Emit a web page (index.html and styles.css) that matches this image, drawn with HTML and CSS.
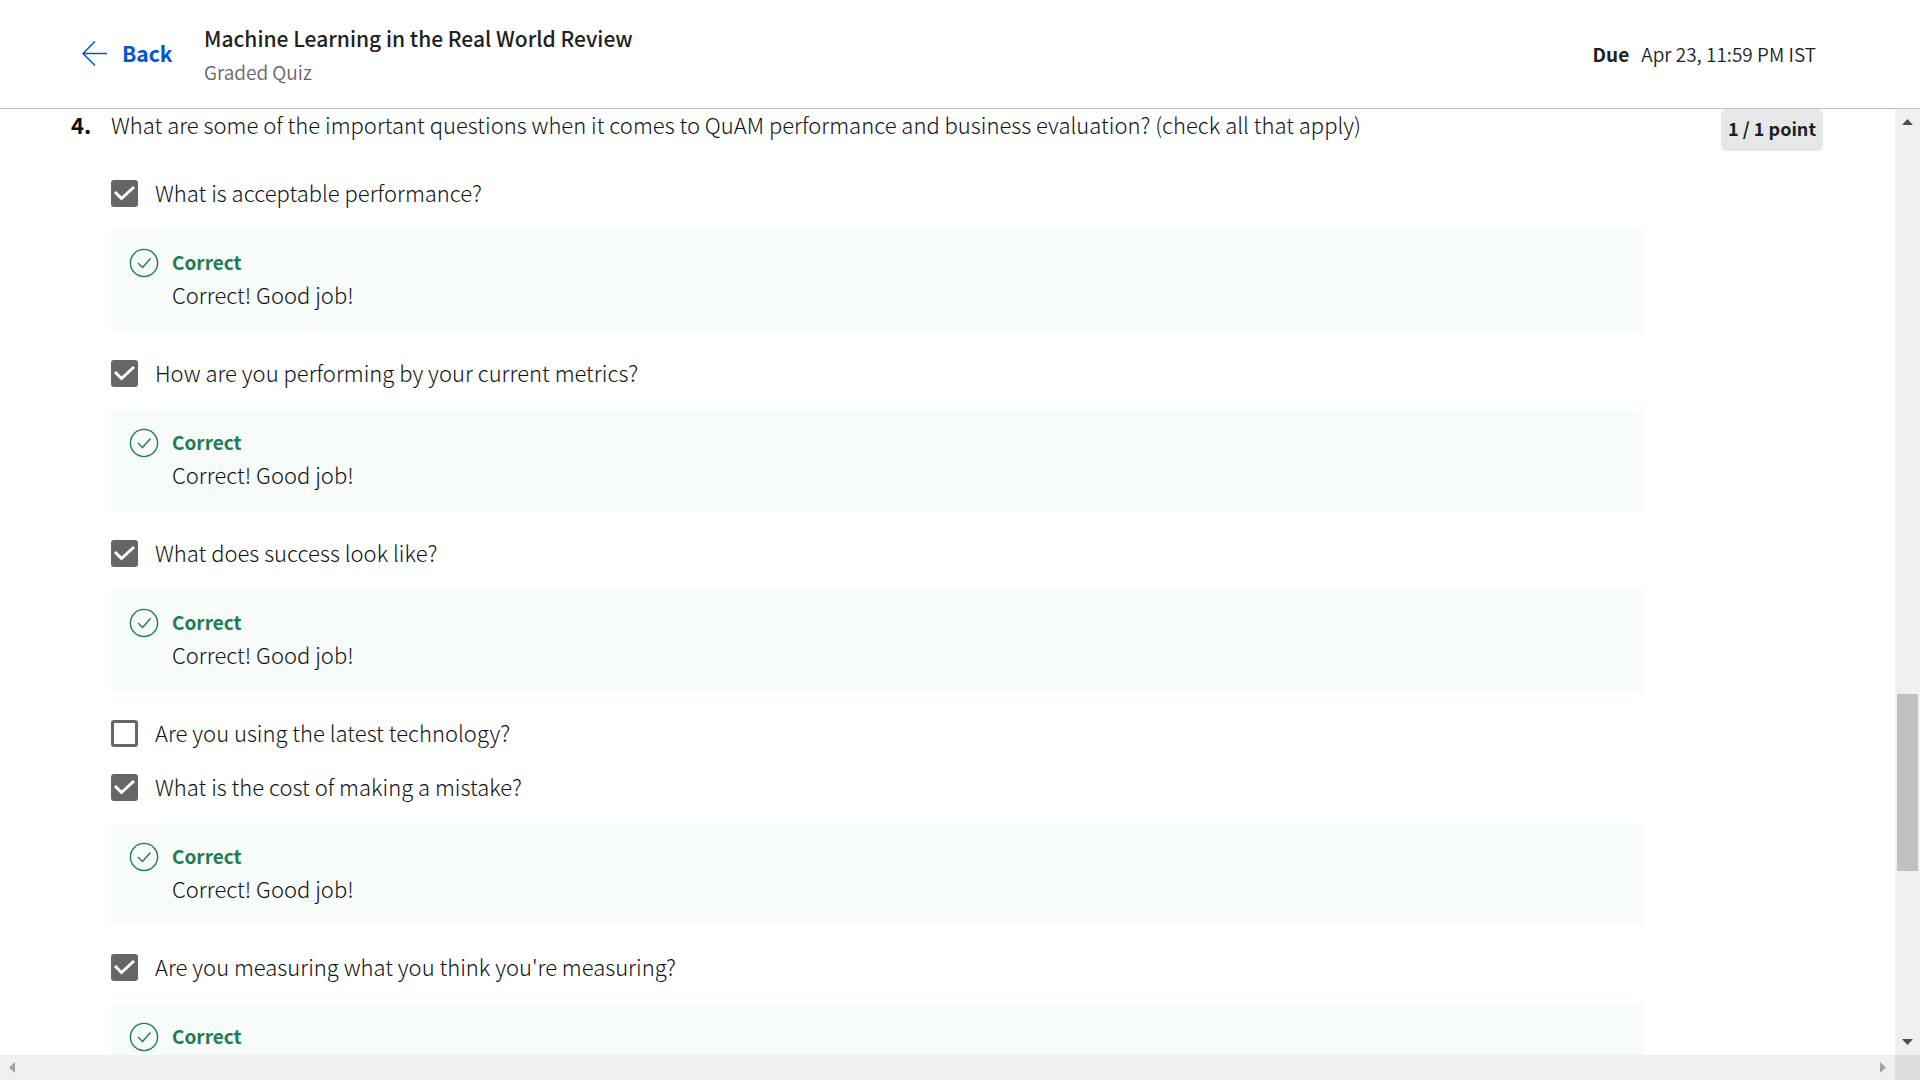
FILE: index.html
```html
<!DOCTYPE html>
<html lang="en">
<head>
<meta charset="utf-8">
<meta name="viewport" content="width=device-width, initial-scale=1">
<title>Machine Learning in the Real World Review</title>
<link rel="stylesheet" href="styles.css">
</head>
<body>
<svg width="0" height="0" class="sprite" aria-hidden="true">
  <symbol id="tick" viewBox="0 0 27 27"><path d="M4 12 10.500 18.500 23 7" fill="none" stroke="#fff" stroke-width="3"/></symbol>
  <symbol id="correct" viewBox="0 0 30 30"><g fill="none" stroke="#1d7c50" stroke-width="1.4"><circle cx="15" cy="15" r="13.6"/><path d="M9 15 13.500 19.500 21.500 10.500"/></g></symbol>
</svg>
<div class="app">
  <header class="header">
    <a class="back" href="#"><svg class="back-icon" viewBox="0 0 25 25" aria-hidden="true"><path d="M13 .5 1 12.500 13 24.500M1 12.500H25" fill="none" stroke="currentColor" stroke-width="1.500"/></svg>Back</a>
    <div class="heading">
      <h1 class="title">Machine Learning in the Real World Review</h1>
      <p class="subtitle">Graded Quiz</p>
    </div>
    <p class="due"><strong>Due</strong><span>Apr 23, 11:59 PM IST</span></p>
  </header>
  <main class="content">
    <div class="question">
      <span class="number">4.</span>
      <form class="body">
        <p class="prompt">What are some of the important questions when it comes to QuAM performance and business evaluation? (check all that apply)</p>
        <label class="option"><span class="box"><input type="checkbox" checked><svg><use href="#tick"/></svg></span>What is acceptable performance?</label>
        <div class="feedback"><svg><use href="#correct"/></svg><div><p class="verdict">Correct</p><p>Correct! Good job!</p></div></div>
        <label class="option"><span class="box"><input type="checkbox" checked><svg><use href="#tick"/></svg></span>How are you performing by your current metrics?</label>
        <div class="feedback"><svg><use href="#correct"/></svg><div><p class="verdict">Correct</p><p>Correct! Good job!</p></div></div>
        <label class="option"><span class="box"><input type="checkbox" checked><svg><use href="#tick"/></svg></span>What does success look like?</label>
        <div class="feedback"><svg><use href="#correct"/></svg><div><p class="verdict">Correct</p><p>Correct! Good job!</p></div></div>
        <label class="option"><span class="box"><input type="checkbox"><svg><use href="#tick"/></svg></span>Are you using the latest technology?</label>
        <label class="option"><span class="box"><input type="checkbox" checked><svg><use href="#tick"/></svg></span>What is the cost of making a mistake?</label>
        <div class="feedback"><svg><use href="#correct"/></svg><div><p class="verdict">Correct</p><p>Correct! Good job!</p></div></div>
        <label class="option"><span class="box"><input type="checkbox" checked><svg><use href="#tick"/></svg></span>Are you measuring what you think you're measuring?</label>
        <div class="feedback"><svg><use href="#correct"/></svg><div><p class="verdict">Correct</p></div></div>
      </form>
      <div class="score"><span class="points">1 / 1 point</span></div>
    </div>
  </main>
  <div class="scroll-y" aria-hidden="true">
    <svg viewBox="0 0 11 6"><path d="M0 6 5.500 0 11 6z"/></svg>
    <div class="track"><div class="thumb"></div></div>
    <svg viewBox="0 0 11 6"><path d="M0 0H11L5.500 6z"/></svg>
  </div>
  <div class="scroll-x" aria-hidden="true">
    <svg viewBox="0 0 6 11"><path d="M6 0V11L0 5.500z"/></svg>
    <svg viewBox="0 0 6 11"><path d="M0 0V11L6 5.500z"/></svg>
  </div>
  <div class="corner"></div>
</div>
</body>
</html>
```

FILE: styles.css
```css
* { box-sizing: border-box; }
body {
  margin: 0;
  background: #fff;
  color: #111;
  font-family: "Noto Sans CJK SC", "Noto Sans", sans-serif;
  font-size: 22px;
  font-weight: 300;
  line-height: 33px;
}
p, h1 { margin: 0; }
.sprite { display: none; }

.app {
  display: grid;
  grid-template-columns: minmax(0, 1fr) 25px;
  grid-template-rows: auto minmax(0, 1fr) 25px;
  height: 100vh;
}

/* Header */
.header {
  grid-column: 1 / -1;
  display: flex;
  align-items: center;
  padding: 20px 104px 21px 82px;
  border-bottom: 1px solid #bdbdbd;
}
.back {
  display: flex;
  align-items: center;
  gap: 15px;
  width: 122px;
  color: #0056d2;
  font-size: 21px;
  font-weight: 700;
  text-decoration: none;
}
.back-icon { flex: none; width: 25px; height: 25px; }
.title { color: #1f1f1f; font-size: 21px; font-weight: 500; line-height: 36px; }
.subtitle { color: #666; font-size: 19px; font-weight: 350; line-height: 31px; }
.due {
  display: flex;
  gap: 12px;
  margin-left: auto;
  color: #1f1f1f;
  font-size: 19px;
  font-weight: 350;
}
.due strong { font-weight: 700; }

/* Question */
.content { overflow: hidden; }
.question { display: flex; padding: 0 72px 0 71px; }
.number { width: 40px; font-weight: 700; line-height: 30px; }
.body { flex: 1; min-width: 0; }
.prompt { margin-bottom: 28px; line-height: 30px; }
.score { display: flex; justify-content: flex-end; align-items: flex-start; width: 179px; }
.points {
  padding: 3px 7px 6px;
  border-radius: 6px;
  background: #e5e7e8;
  color: #1f1f1f;
  font-size: 18px;
  font-weight: 700;
}

.option {
  display: flex;
  align-items: flex-start;
  gap: 17px;
  height: 54px;
  padding-top: 9px;
}
.box { display: grid; width: 27px; height: 27px; margin-top: 4px; }
.box > * { grid-area: 1 / 1; width: 27px; height: 27px; margin: 0; pointer-events: none; }
.box input {
  appearance: none;
  border: 3px solid #666;
  border-radius: 3px;
  background: #fff;
  pointer-events: auto;
}
.box input:checked { background: #666; }
.box input:not(:checked) + svg { visibility: hidden; }

.feedback {
  display: flex;
  gap: 13px;
  min-height: 102px;
  margin: 9px 0 15px;
  padding: 15px 18px 21px;
  background: #f7fbf9;
}
.feedback svg { width: 30px; height: 30px; margin-top: 3px; }
.verdict { color: #1d7c50; font-size: 19px; font-weight: 700; }

/* Scrollbars */
.scroll-y {
  display: flex;
  flex-direction: column;
  align-items: center;
  gap: 11px;
  padding: 10px 0;
  background: #f0f0f0;
  fill: #505050;
}
.scroll-y svg { width: 11px; height: 6px; }
.track { flex: 1; width: 21px; padding-top: 558px; }
.thumb { height: 177px; background: #c1c1c1; }
.scroll-x {
  display: flex;
  align-items: center;
  justify-content: space-between;
  padding: 0 9px;
  background: #f0f0f0;
  fill: #a3a3a3;
}
.scroll-x svg { width: 6px; height: 11px; }
.corner { background: #dcdcdc; }
```
